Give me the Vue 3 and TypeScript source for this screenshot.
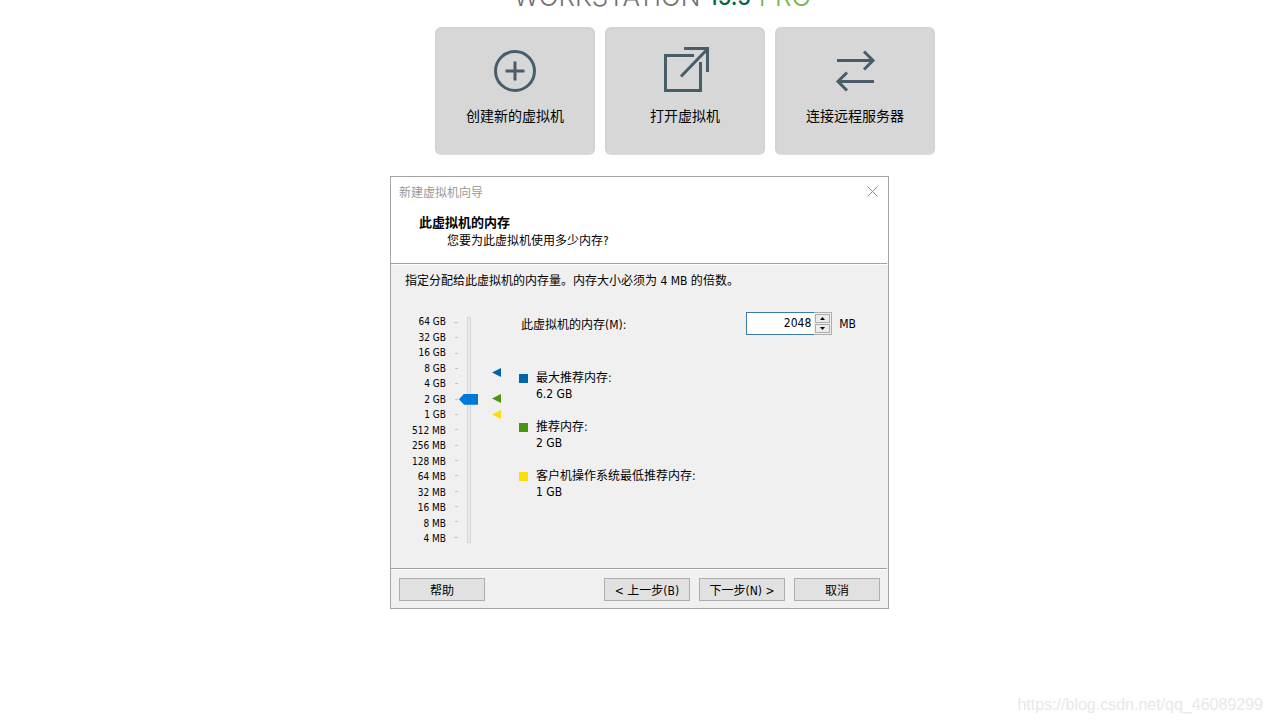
<script setup lang="ts">
import { computed, ref } from 'vue'

interface Hint {
  tone: 'max' | 'rec' | 'min'
  label: string
  value: string
}

const scale: string[] = [
  '64 GB', '32 GB', '16 GB', '8 GB', '4 GB', '2 GB', '1 GB',
  '512 MB', '256 MB', '128 MB', '64 MB', '32 MB', '16 MB', '8 MB', '4 MB',
]

const hints: Hint[] = [
  { tone: 'max', label: '最大推荐内存:', value: '6.2 GB' },
  { tone: 'rec', label: '推荐内存:', value: '2 GB' },
  { tone: 'min', label: '客户机操作系统最低推荐内存:', value: '1 GB' },
]

const memory = ref<number>(2048)

// The slider is logarithmic: step 0 is 4 MB, step 14 is 64 GB.
const step = computed<number>({
  get: () => Math.round(Math.log2(Math.max(memory.value, 4) / 4)),
  set: (v) => { memory.value = 4 * 2 ** Number(v) },
})

function nudge(delta: number): void {
  memory.value = Math.min(65536, Math.max(4, Number(memory.value) + delta))
}
</script>

<template>
  <div class="page">
    <h1 class="brand">
      WORKSTATION <span class="version">15.5</span> <span class="edition">PRO</span>
    </h1>

    <nav class="cards">
      <button type="button" class="card">
        <svg viewBox="0 0 50 50" class="card-icon" aria-hidden="true">
          <circle cx="25" cy="24" r="19.5" />
          <path d="M15.5 24H34.5M25 14.5V33.5" />
        </svg>
        <span>创建新的虚拟机</span>
      </button>
      <button type="button" class="card">
        <svg viewBox="0 0 50 50" class="card-icon" aria-hidden="true">
          <path d="M34 8.5H5.500V43.500H40.500V15" />
          <path d="M24 1.500H47.500V25" />
          <path d="M21 29.500L47.500 2" />
        </svg>
        <span>打开虚拟机</span>
      </button>
      <button type="button" class="card">
        <svg viewBox="0 0 50 50" class="card-icon" aria-hidden="true">
          <path d="M7 13.500H43M34 4.500L43 13.500L34 22.500" />
          <path d="M44 34.500H8M17 25.500L8 34.500L17 43.500" />
        </svg>
        <span>连接远程服务器</span>
      </button>
    </nav>

    <section class="dialog" role="dialog" aria-labelledby="dialog-title">
      <div class="titlebar">
        <span id="dialog-title">新建虚拟机向导</span>
        <button type="button" class="close" aria-label="关闭">
          <svg viewBox="0 0 11 11" width="11" height="11" aria-hidden="true">
            <path d="M0.500 0.500L10.500 10.500M10.500 0.500L0.500 10.500" />
          </svg>
        </button>
      </div>
      <header class="intro">
        <h2>此虚拟机的内存</h2>
        <p>您要为此虚拟机使用多少内存?</p>
      </header>
      <hr class="rule">

      <div class="body">
        <p class="note">指定分配给此虚拟机的内存量。内存大小必须为 4 MB 的倍数。</p>

        <div class="panel">
          <ul class="scale">
            <li v-for="s in scale" :key="s">{{ s }}</li>
          </ul>
          <div class="ticks">
            <i v-for="s in scale" :key="s"></i>
          </div>
          <input v-model="step" class="slider" type="range" min="0" max="14" aria-label="内存">
          <svg class="markers" viewBox="0 0 9 226" aria-hidden="true">
            <path class="max" d="M0 55.500L9 51V60Z" />
            <path class="rec" d="M0 81.500L9 77V86Z" />
            <path class="min" d="M0 97.500L9 93V102Z" />
          </svg>

          <div class="info">
            <div class="field">
              <label for="memory">此虚拟机的内存(M):</label>
              <div class="spin">
                <input id="memory" v-model="memory" type="text" inputmode="numeric">
                <div class="arrows">
                  <button type="button" aria-label="增加" @click="nudge(4)">
                    <svg viewBox="0 0 5 3" width="5" height="3"><path d="M0 3L2.500 0L5 3Z" /></svg>
                  </button>
                  <button type="button" aria-label="减少" @click="nudge(-4)">
                    <svg viewBox="0 0 5 3" width="5" height="3"><path d="M0 0L2.500 3L5 0Z" /></svg>
                  </button>
                </div>
              </div>
              <span class="unit">MB</span>
            </div>

            <dl class="hints">
              <div v-for="h in hints" :key="h.tone" class="hint" :class="h.tone">
                <dt>{{ h.label }}</dt>
                <dd>{{ h.value }}</dd>
              </div>
            </dl>
          </div>
        </div>
      </div>
      <hr class="rule">

      <footer class="actions">
        <button type="button" class="help">帮助</button>
        <button type="button">&lt; 上一步(B)</button>
        <button type="button">下一步(N) &gt;</button>
        <button type="button">取消</button>
      </footer>
    </section>

    <p class="watermark">https://blog.csdn.net/qq_46089299</p>
  </div>
</template>

<style>
body {
  margin: 0;
  background: #fff;
}
</style>

<style scoped>
.page {
  position: relative;
  box-sizing: border-box;
  min-height: 100vh;
  overflow: hidden;
  display: flex;
  flex-direction: column;
  align-items: center;
  color: #000;
  font-family: "DejaVu Sans Condensed", "Noto Sans", "Noto Sans CJK SC", sans-serif;
  font-size: 12px;
}
h1, h2, p, ul, dl, dd {
  margin: 0;
  padding: 0;
}
button, input {
  font: inherit;
  color: inherit;
  margin: 0;
}
.brand {
  box-sizing: border-box;
  height: 27px;
  padding: 0 0 16px 54px;
  overflow: hidden;
  display: flex;
  align-items: flex-end;
  gap: 8px;
  white-space: nowrap;
  font-family: Inter, Lato, sans-serif;
  font-size: 26px;
  line-height: 28px;
  font-weight: 300;
  color: #717074;
}
.version {
  color: #00693e;
  font-size: 22px;
  font-weight: 500;
}
.edition {
  color: #6db33f;
}
.cards {
  display: flex;
  gap: 10px;
  padding-left: 99px;
}
.card {
  box-sizing: border-box;
  width: 160px;
  height: 128px;
  padding: 18px 0 0;
  display: flex;
  flex-direction: column;
  align-items: center;
  gap: 8px;
  border: 2px solid #d3d3d3;
  border-bottom: 1px solid #dcdcdc;
  border-radius: 6px;
  background: #d7d7d7;
  font-family: "Noto Sans CJK SC", sans-serif;
  font-size: 14px;
  line-height: 20px;
}
.card-icon {
  width: 50px;
  height: 50px;
  fill: none;
  stroke: #495d69;
  stroke-width: 3;
}
.dialog {
  box-sizing: border-box;
  width: 499px;
  margin: 21px 0 0 8px;
  border: 1px solid #a5a5a5;
  background: #f0f0f0;
}
.titlebar {
  display: flex;
  justify-content: space-between;
  align-items: center;
  height: 28px;
  padding: 0 10px 0 8px;
  background: #fff;
  color: #999;
}
.close {
  display: flex;
  padding: 0;
  border: 0;
  background: none;
}
.close path {
  fill: none;
  stroke: #8a8a8a;
}
.intro {
  padding: 9px 28px 13px;
  background: #fff;
  line-height: 18px;
}
.rule {
  height: 1px;
  margin: 0 1px 0 0;
  border: 0;
  border-bottom: 1px solid #fff;
  background: #a0a0a0;
}
.intro h2 {
  font-size: 13px;
  font-weight: 700;
}
.intro p {
  padding-left: 28px;
}
.body {
  padding: 7px 8px 22px 14px;
}
.note {
  line-height: 18px;
}
.panel {
  display: flex;
  align-items: flex-start;
  margin-top: 22px;
}
.scale {
  width: 41px;
  margin-top: 3px;
  list-style: none;
  height: 231px;
  display: flex;
  flex-direction: column;
  justify-content: space-between;
  font-size: 10px;
  line-height: 14px;
  text-align: right;
  white-space: nowrap;
}
.ticks {
  width: 4px;
  height: 216px;
  margin: 10px 0 0 8px;
  display: flex;
  flex-direction: column;
  justify-content: space-between;
  align-items: flex-end;
}
.ticks i {
  width: 3px;
  height: 1px;
  background: #c0c4c4;
}
.ticks i:first-child, .ticks i:last-child {
  width: 4px;
}
.slider {
  appearance: none;
  -webkit-appearance: none;
  writing-mode: vertical-lr;
  direction: rtl;
  width: 19px;
  height: 226px;
  margin: 5px 0 0 1px;
  background:
    linear-gradient(#e7eaea, #e7eaea) 9px 1px / 2px 224px no-repeat,
    linear-gradient(#d6d6d6, #d6d6d6) 8px 0 / 4px 226px no-repeat;
}
.slider::-webkit-slider-runnable-track {
  width: 19px;
  height: 226px;
  background: none;
}
.slider::-webkit-slider-thumb {
  appearance: none;
  -webkit-appearance: none;
  width: 19px;
  height: 11px;
  border: 0;
  border-radius: 0;
  background: #0078d7;
  clip-path: polygon(0 50%, 5px 0, 100% 0, 100% 100%, 5px 100%);
}
.markers {
  width: 9px;
  height: 226px;
  margin: 5px 0 0 14px;
}
.markers .max { fill: #0065ab; }
.markers .rec { fill: #48960c; }
.markers .min { fill: #ffdc0b; }
.info {
  flex: 1;
  margin-left: 18px;
}
.field {
  display: flex;
  align-items: center;
  height: 23px;
  padding: 0 24px 0 2px;
}
.field label {
  flex: 1;
}
.spin {
  box-sizing: border-box;
  display: flex;
  width: 86px;
  height: 23px;
  border: 1px solid #abadb3;
  border-left: 0;
}
.spin input {
  box-sizing: border-box;
  flex: 1;
  min-width: 0;
  margin: -1px 0;
  padding: 0 3px 2px;
  border: 1px solid #3d7bad;
  border-right: 0;
  border-radius: 0;
  outline: 0;
  background: #fff;
  text-align: right;
}
.arrows {
  display: flex;
  flex-direction: column;
  gap: 1px;
  padding: 1px;
}
.arrows button {
  box-sizing: border-box;
  flex: 1;
  width: 15px;
  display: flex;
  align-items: center;
  justify-content: center;
  padding: 0;
  border: 1px solid #acacac;
  background: #ececec;
}
.unit {
  margin-left: 7px;
}
.hints {
  display: flex;
  flex-direction: column;
  gap: 17px;
  margin-top: 35px;
  line-height: 16px;
}
.hint {
  padding-left: 17px;
}
.hint dt::before {
  content: "";
  float: left;
  width: 9px;
  height: 9px;
  margin: 4px 0 0 -17px;
  background: currentColor;
}
.hint.max dt::before { background: #0065ab; }
.hint.rec dt::before { background: #48960c; }
.hint.min dt::before { background: #ffdc0b; }
.actions {
  display: flex;
  gap: 9px;
  padding: 8px 8px 7px;
}
.actions button {
  box-sizing: border-box;
  width: 86px;
  height: 23px;
  padding: 0;
  border: 1px solid #adadad;
  background: #e1e1e1;
  white-space: nowrap;
}
.actions .help {
  margin-right: auto;
}
.watermark {
  position: absolute;
  right: 8px;
  bottom: 8px;
  font-family: "Liberation Sans", sans-serif;
  font-size: 16px;
  line-height: 20px;
  color: #e8e8e8;
}
</style>
